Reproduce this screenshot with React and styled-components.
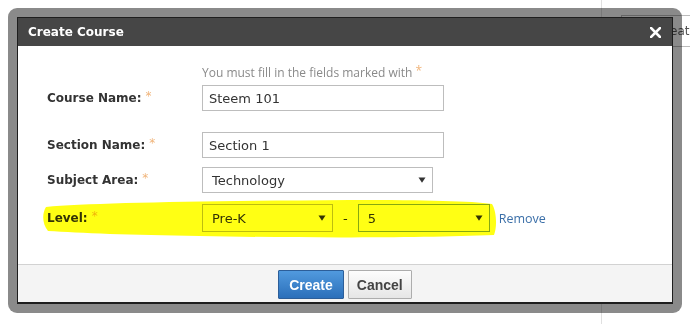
import React from "react";
import styled, { createGlobalStyle } from "styled-components";

const GlobalStyle = createGlobalStyle`
  html, body { margin: 0; padding: 0; }
  body {
    width: 690px;
    height: 324px;
    overflow: hidden;
    background: #fff;
    font-family: "DejaVu Sans", Verdana, sans-serif;
  }
`;

const Page = styled.div`
  position: relative;
  isolation: isolate;
  width: 690px;
  height: 324px;
  display: flex;
  background: #fff;
`;

const MainArea = styled.div`
  flex: none;
  width: 601px;
`;

const SideColumn = styled.div`
  flex: 1;
  min-width: 0;
  overflow: hidden;
  border-left: 1px solid #e0e0e0;
  padding: 15px 0 0 19px;
`;

const BgButton = styled.div`
  box-sizing: border-box;
  height: 32px;
  width: 100px;
  border: 1px solid #bbb;
  border-right: none;
  padding-left: 35px;
  display: flex;
  align-items: center;
  font-size: 12px;
  color: #555;
  background: #fff;
  white-space: nowrap;
`;

const Frame = styled.div`
  position: absolute;
  left: 8px;
  top: 8px;
  width: 674px;
  height: 305px;
  box-sizing: border-box;
  padding: 9px;
  border-radius: 9px;
  background: rgba(0, 0, 0, 0.46);
`;

const Dialog = styled.div`
  box-sizing: border-box;
  height: 100%;
  border: 1px solid #1e1e1e;
  border-bottom-width: 2px;
  background: #fff;
  display: flex;
  flex-direction: column;
`;

const Header = styled.div`
  flex: none;
  height: 28px;
  background: #464646;
  display: flex;
  align-items: center;
  justify-content: space-between;
  padding: 0 11px 0 10px;
  color: #fff;
  font-weight: bold;
  font-size: 12px;
`;

const CloseIcon = styled.svg`
  display: block;
`;

const Body = styled.div`
  flex: 1;
  padding: 19px 0 0 29px;
`;

const Row = styled.div`
  display: grid;
  grid-template-columns: 155px auto;
  align-items: center;
  margin-top: ${(p) => p.$top}px;
`;

const Label = styled.div`
  font-weight: bold;
  font-size: 12px;
  color: #333;
  white-space: nowrap;
`;

const Req = styled.span`
  color: #f0b47a;
  font-weight: normal;
  font-size: 12px;
  margin-left: ${(p) => (p.$tight ? 0 : 4)}px;
  position: relative;
  top: -2px;
`;

const Hint = styled.div`
  font-family: "Open Sans", sans-serif;
  font-size: 12px;
  line-height: 16px;
  color: #8a8a8a;
  white-space: nowrap;
`;

const TextInput = styled.input`
  box-sizing: border-box;
  width: 242px;
  height: 26px;
  border: 1px solid #bdbdbd;
  padding: 0 6px;
  margin: 0;
  font-family: "DejaVu Sans", Verdana, sans-serif;
  font-size: 13px;
  color: #333;
  outline: none;
  background: #fff;
`;

const SelectBox = styled.div`
  box-sizing: border-box;
  display: flex;
  align-items: center;
  justify-content: space-between;
  width: ${(p) => p.$w}px;
  height: ${(p) => p.$h}px;
  border: 1px solid ${(p) => (p.$focus ? "#86a8d4" : "#bdbdbd")};
  padding: 0 6px 0 9px;
  font-size: 13px;
  color: #333;
  background: #fff;
`;

const Controls = styled.div`
  display: flex;
  align-items: center;
`;

const Dash = styled.span`
  font-size: 13px;
  color: #333;
  margin: 0 10px;
`;

const RemoveLink = styled.a`
  font-family: "Open Sans", sans-serif;
  font-size: 12.5px;
  color: #3b6fa8;
  margin-left: 9px;
  text-decoration: none;
  cursor: pointer;
`;

const Footer = styled.div`
  flex: none;
  height: 37px;
  border-top: 1px solid #d2d2d2;
  background: #f4f4f4;
  display: flex;
  justify-content: center;
  align-items: center;
  gap: 4px;
`;

const Button = styled.button`
  box-sizing: border-box;
  height: 29px;
  margin: 2px 0 0;
  padding: 0 ${(p) => (p.$primary ? 10 : 8)}px;
  font-family: "Liberation Sans", Arial, sans-serif;
  font-weight: bold;
  font-size: 14px;
  border-radius: 1px;
  cursor: pointer;
  color: ${(p) => (p.$primary ? "#fff" : "#444")};
  border: 1px solid ${(p) => (p.$primary ? "#2c5e99" : "#adadad")};
  background: ${(p) =>
    p.$primary
      ? "linear-gradient(#519ade, #2b6fba)"
      : "linear-gradient(#fdfdfd, #e6e6e6)"};
`;

const Highlight = styled.svg`
  position: absolute;
  left: 0;
  top: 0;
  pointer-events: none;
  mix-blend-mode: multiply;
`;

function Arrow() {
  return (
    <svg width="8" height="6" viewBox="0 0 8 6">
      <path d="M0.5 0.5 H7.5 L4 5.8 Z" fill="#333" />
    </svg>
  );
}

function Select({ value, w, h = 26, focus }) {
  return (
    <SelectBox $w={w} $h={h} $focus={focus}>
      <span>{value}</span>
      <Arrow />
    </SelectBox>
  );
}

export default function App() {
  return (
    <>
      <GlobalStyle />
      <Page>
        <MainArea />
        <SideColumn>
          <BgButton>Create</BgButton>
        </SideColumn>

        <Frame>
          <Dialog>
            <Header>
              <span>Create Course</span>
              <CloseIcon width="11" height="11" viewBox="0 0 11 11">
                <path
                  d="M1 1 L10 10 M10 1 L1 10"
                  stroke="#fff"
                  strokeWidth="2.6"
                  strokeLinecap="square"
                />
              </CloseIcon>
            </Header>
            <Body>
              <Row $top={0}>
                <span />
                <Hint>
                  You must fill in the fields marked with <Req $tight>*</Req>
                </Hint>
              </Row>
              <Row $top={4}>
                <Label>
                  Course Name:<Req>*</Req>
                </Label>
                <TextInput defaultValue="Steem 101" />
              </Row>
              <Row $top={21}>
                <Label>
                  Section Name:<Req>*</Req>
                </Label>
                <TextInput defaultValue="Section 1" />
              </Row>
              <Row $top={9}>
                <Label>
                  Subject Area:<Req>*</Req>
                </Label>
                <Select value="Technology" w={231} />
              </Row>
              <Row $top={11}>
                <Label>
                  Level:<Req>*</Req>
                </Label>
                <Controls>
                  <Select value="Pre-K" w={131} h={28} />
                  <Dash>-</Dash>
                  <Select value="5" w={132} h={28} focus />
                  <RemoveLink>Remove</RemoveLink>
                </Controls>
              </Row>
            </Body>
            <Footer>
              <Button $primary>Create</Button>
              <Button>Cancel</Button>
            </Footer>
          </Dialog>
        </Frame>

        <Highlight width="690" height="324" viewBox="0 0 690 324">
          <path
            d="M46 207 C 90 203 200 201 350 200 C 430 200 470 201 492 204 C 497 212 497 228 494 235 C 420 238 300 238 200 236 C 130 235 80 233 48 231 C 42 224 42 213 46 207 Z"
            fill="#ffff14"
          />
        </Highlight>
      </Page>
    </>
  );
}
